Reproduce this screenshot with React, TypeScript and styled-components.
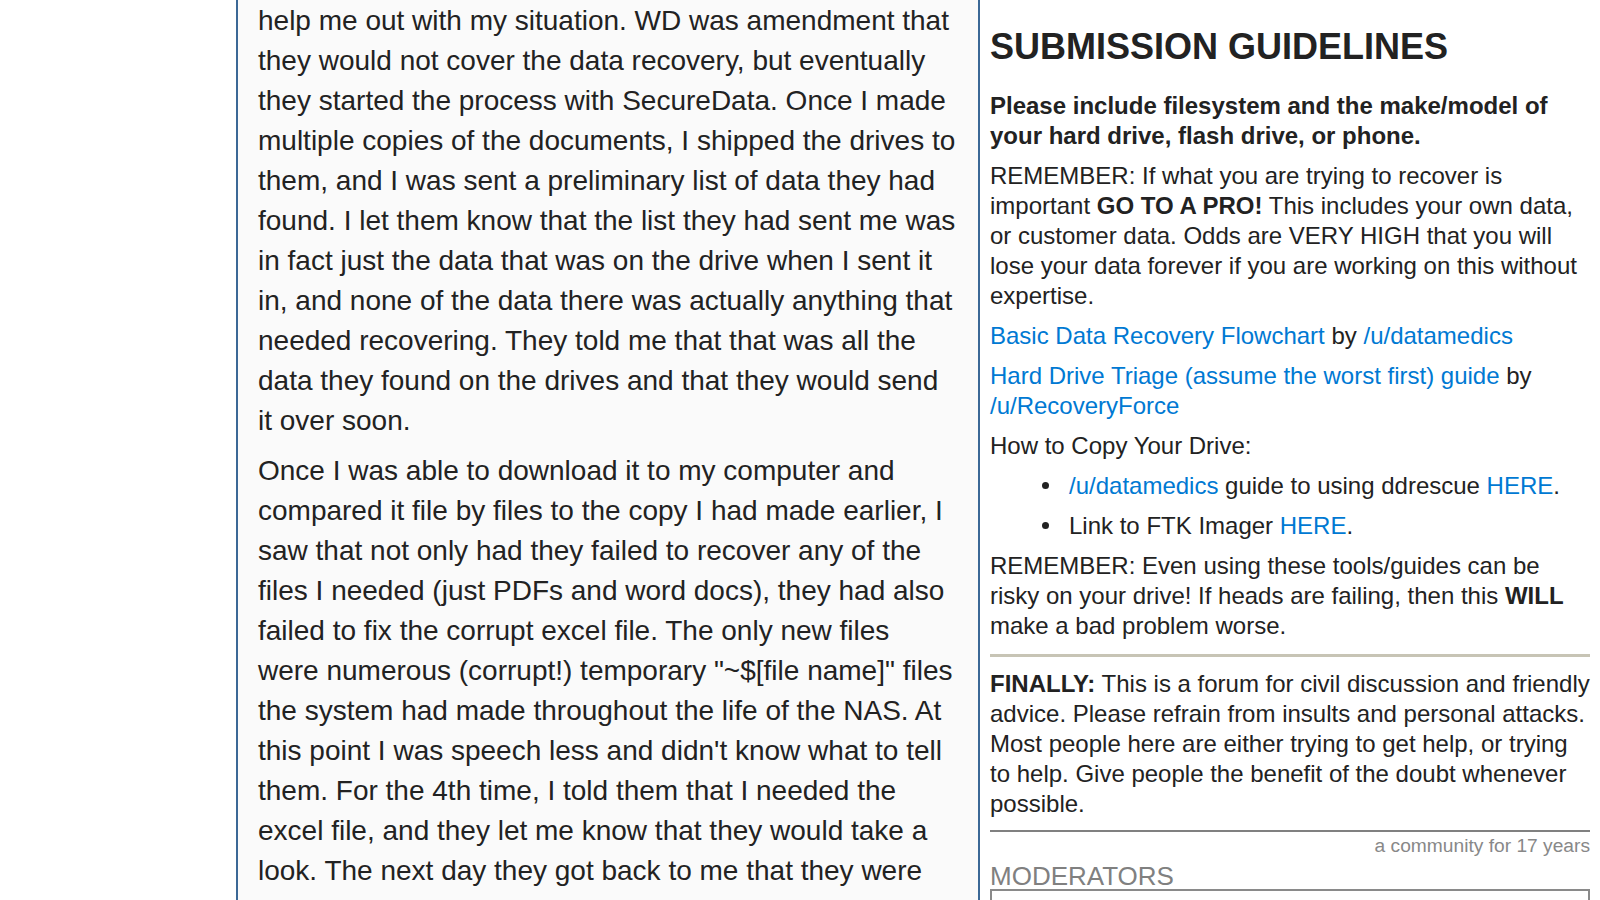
import React from "react";
import styled, { createGlobalStyle } from "styled-components";

const Global = createGlobalStyle`
  html, body {
    margin: 0;
    padding: 0;
    background: #ffffff;
    height: 900px;
    overflow: hidden;
  }
  body {
    font-family: "Liberation Sans", Arial, sans-serif;
    color: #222222;
  }
`;

const Page = styled.div`
  display: flex;
  align-items: flex-start;
  width: 1600px;
  height: 900px;
  overflow: hidden;
`;

const Gutter = styled.div`
  flex: 0 0 236px;
`;

const Post = styled.article`
  flex: 0 0 699px;
  min-height: 900px;
  background: #fafafa;
  border-left: 2px solid #3b6896;
  border-right: 2px solid #3b6896;
  padding: 1px 21px 0 20px;
`;

const PostP = styled.p`
  margin: 0 0 10px;
  font-size: 28px;
  line-height: 40px;
  color: #222222;
`;

const Side = styled.aside`
  flex: 0 0 602px;
  padding: 0 8px 0 10px;
  font-size: 24px;
  line-height: 30px;
  color: #222222;
`;

const SideTitle = styled.h2`
  margin: 26px 0 23px;
  font-size: 36px;
  line-height: 42px;
  font-weight: 700;
  color: #222222;
`;

const SideP = styled.p`
  margin: 10px 0;
`;

const Lead = styled(SideP)`
  font-weight: 700;
  margin-top: 0;
`;

const Link = styled.a`
  color: #0079d3;
  text-decoration: none;
`;

const List = styled.ul`
  margin: 10px 0;
  padding-left: 79px;
  list-style: none;
`;

const Item = styled.li`
  &::before {
    content: "";
    display: inline-block;
    width: 7px;
    height: 7px;
    border-radius: 50%;
    background: #222222;
    margin-left: -27px;
    margin-right: 20px;
    vertical-align: 5px;
  }
  & + & {
    margin-top: 10px;
  }
`;

const Rule = styled.div<{ $tone: "sand" | "gray" }>`
  height: ${(p) => (p.$tone === "sand" ? "3px" : "2px")};
  background: ${(p) => (p.$tone === "sand" ? "#c7c4b5" : "#808080")};
  margin: ${(p) => (p.$tone === "sand" ? "13px 2px 12px 0" : "11px 2px 3px 0")};
`;

const Age = styled.div`
  text-align: right;
  font-size: 19.2px;
  line-height: 22px;
  color: #888888;
  margin-right: 2px;
`;

const ModHeading = styled.h3`
  margin: 6px 0 0;
  font-size: 26px;
  line-height: 26px;
  font-weight: 400;
  color: #808080;
  text-transform: uppercase;
`;

const ModBox = styled.div`
  height: 120px;
  margin-right: 2px;
  border: 2px solid #8a8a8a;
`;

export default function App() {
  return (
    <>
      <Global />
      <Page>
        <Gutter />
        <Post>
          <PostP>
            help me out with my situation. WD was amendment that they would not cover the data
            recovery, but eventually they started the process with SecureData. Once I made
            multiple copies of the documents, I shipped the drives to them, and I was sent a
            preliminary list of data they had found. I let them know that the list they had sent
            me was in fact just the data that was on the drive when I sent it in, and none of the
            data there was actually anything that needed recovering. They told me that that was
            all the data they found on the drives and that they would send it over soon.
          </PostP>
          <PostP>
            Once I was able to download it to my computer and compared it file by files to the
            copy I had made earlier, I saw that not only had they failed to recover any of the
            files I needed (just PDFs and word docs), they had also failed to fix the corrupt
            excel file. The only new files were numerous (corrupt!) temporary "~$[file name]"
            files the system had made throughout the life of the NAS. At this point I was speech
            less and didn't know what to tell them. For the 4th time, I told them that I needed
            the excel file, and they let me know that they would take a look. The next day they
            got back to me that they were unable to fix the file and that it would still be
            corrupted.
          </PostP>
        </Post>
        <Side>
          <SideTitle>SUBMISSION GUIDELINES</SideTitle>
          <Lead>
            Please include filesystem and the make/model of your hard drive, flash drive, or
            phone.
          </Lead>
          <SideP>
            REMEMBER: If what you are trying to recover is important <strong>GO TO A PRO!</strong>{" "}
            This includes your own data, or customer data. Odds are VERY HIGH that you will lose
            your data forever if you are working on this without expertise.
          </SideP>
          <SideP>
            <Link href="#">Basic Data Recovery Flowchart</Link> by{" "}
            <Link href="#">/u/datamedics</Link>
          </SideP>
          <SideP>
            <Link href="#">Hard Drive Triage (assume the worst first) guide</Link> by{" "}
            <Link href="#">/u/RecoveryForce</Link>
          </SideP>
          <SideP>How to Copy Your Drive:</SideP>
          <List>
            <Item>
              <Link href="#">/u/datamedics</Link> guide to using ddrescue{" "}
              <Link href="#">HERE</Link>.
            </Item>
            <Item>
              Link to FTK Imager <Link href="#">HERE</Link>.
            </Item>
          </List>
          <SideP>
            REMEMBER: Even using these tools/guides can be risky on your drive! If heads are
            failing, then this <strong>WILL</strong> make a bad problem worse.
          </SideP>
          <Rule $tone="sand" />
          <SideP>
            <strong>FINALLY:</strong> This is a forum for civil discussion and friendly advice.
            Please refrain from insults and personal attacks. Most people here are either trying
            to get help, or trying to help. Give people the benefit of the doubt whenever
            possible.
          </SideP>
          <Rule $tone="gray" />
          <Age>a community for 17 years</Age>
          <ModHeading>Moderators</ModHeading>
          <ModBox />
        </Side>
      </Page>
    </>
  );
}
